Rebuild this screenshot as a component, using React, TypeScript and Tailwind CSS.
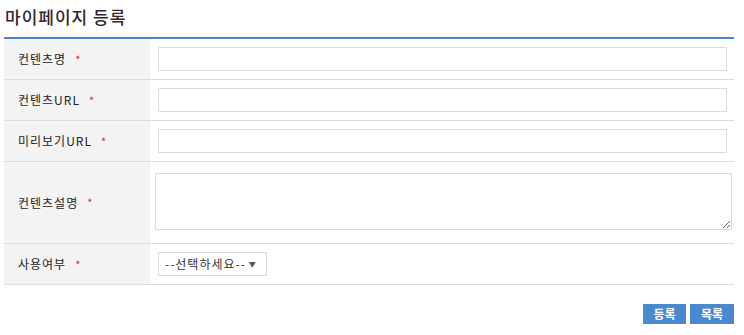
import React from 'react'

const font = { fontFamily: '"Noto Sans CJK KR", "Noto Sans", sans-serif' }

function Star() {
  return <span className="ml-[9px] text-[11px] text-[#d62a1a]">*</span>
}

function Row({ label, tall, children }: { label: string; tall?: boolean; children: React.ReactNode }) {
  return (
    <div className={`flex border-b border-[#dcdcdc] ${tall ? 'h-[82px]' : 'h-[41px]'}`}>
      <div className="w-[146px] shrink-0 bg-[#f3f3f3] flex items-center pl-[14px] text-[12px] tracking-[1px] text-[#222]">
        {label}
        <Star />
      </div>
      <div className="flex-1 flex items-center">{children}</div>
    </div>
  )
}

function TextInput() {
  return <input type="text" className="ml-[8px] w-[569px] h-[24px] border border-[#dcdcdc] bg-white outline-none" />
}

export default function App() {
  return (
    <div className="w-[744px] h-[335px] bg-white" style={font}>
      <h1 className="pl-[5px] pt-[6px] h-[37px] text-[17px] leading-[22px] tracking-[1px] font-medium text-[#33262e]">마이페이지 등록</h1>
      <div className="ml-[4px] w-[730px] border-t-2 border-[#4a86cf]">
        <Row label="컨텐츠명">
          <TextInput />
        </Row>
        <Row label="컨텐츠URL">
          <TextInput />
        </Row>
        <Row label="미리보기URL">
          <TextInput />
        </Row>
        <Row label="컨텐츠설명" tall>
          <textarea className="ml-[5px] mb-[2px] w-[577px] h-[57px] border border-[#dcdcdc] bg-white outline-none resize-y" />
        </Row>
        <Row label="사용여부">
          <div className="ml-[8px] w-[109px] h-[24px] border border-[#dcdcdc] bg-white flex items-center pl-[6px] text-[12px] tracking-[1px] text-[#333]">
            <span>--선택하세요--</span>
            <span className="ml-[3px] text-[7px] text-[#555]">▼</span>
          </div>
        </Row>
      </div>
      <div className="flex justify-end gap-[4px] w-[734px] mt-[19px]">
        <button className="w-[43px] h-[20px] bg-[#4a88d0] text-white text-[12px] font-bold leading-[20px]">등록</button>
        <button className="w-[44px] h-[20px] bg-[#4a88d0] text-white text-[12px] font-bold leading-[20px]">목록</button>
      </div>
    </div>
  )
}
